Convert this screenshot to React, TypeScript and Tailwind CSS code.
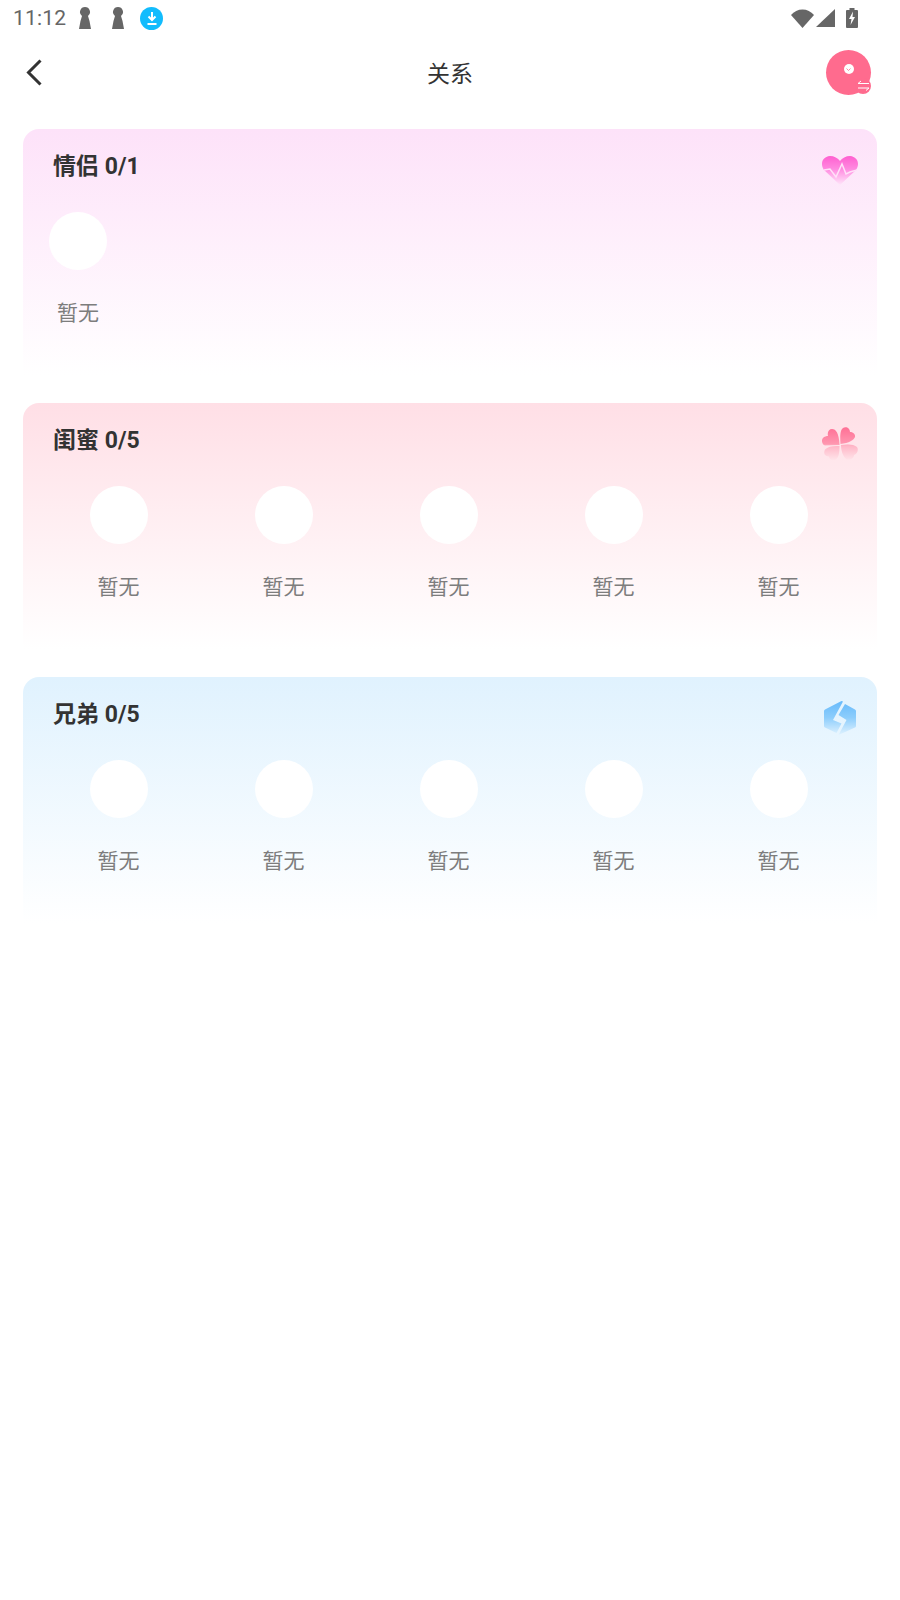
const FONT = "font-['Roboto','Noto_Sans_CJK_SC',sans-serif]";

function Keyhole({ className = "" }: { className?: string }) {
  return (
    <svg width="12" height="22" viewBox="0 0 12 22" className={className}>
      <path d="M6 0a5 5 0 0 1 3 9l1.500 5 1.500 8H0l1.500-8L3 9a5 5 0 0 1 3-9z" fill="#666" />
    </svg>
  );
}

function StatusBar() {
  return (
    <div className="h-[36px] flex items-center justify-between pl-[13px] pr-[42px]">
      <div className="flex items-center">
        <span className="text-[21px] tracking-[0.2px] text-[#666] mt-[1px]">11:12</span>
        <Keyhole className="ml-[13px]" />
        <Keyhole className="ml-[21px]" />
        <div className="ml-[16px] w-[23px] h-[23px] rounded-full bg-[#12bcfd] flex items-center justify-center">
          <svg width="14" height="15" viewBox="0 0 14 15">
            <path d="M7 1v7M3.500 5.500 7 9l3.500-3.500M2.500 13h9" stroke="#fff" strokeWidth="2" fill="none" />
          </svg>
        </div>
      </div>
      <div className="flex items-center">
        <svg width="23" height="19" viewBox="0 0 23 19">
          <path d="M0 6C3 2.500 7 .5 11.500 .5S20 2.500 23 6L11.500 19z" fill="#666" />
        </svg>
        <svg width="19" height="18" viewBox="0 0 19 18" className="ml-[2px]">
          <path d="M0 18 19 0v18z" fill="#666" />
        </svg>
        <svg width="12" height="20" viewBox="0 0 12 20" className="ml-[11px]">
          <path d="M3.500 0h5v2H11a1 1 0 0 1 1 1v16a1 1 0 0 1-1 1H1a1 1 0 0 1-1-1V3a1 1 0 0 1 1-1h2.500z" fill="#666" />
          <path d="M7 3.500 3 11h2.500L4.500 17 9 9H6.500z" fill="#fff" />
        </svg>
      </div>
    </div>
  );
}

function Header() {
  return (
    <div className="h-[75px] grid grid-cols-3 items-center">
      <div className="pl-[26px] mt-[-2px]">
        <svg width="16" height="27" viewBox="0 0 16 27">
          <path d="M14.500 1.500 2.500 13.500l12 12" stroke="#333" strokeWidth="3" fill="none" />
        </svg>
      </div>
      <span className="text-[23px] text-[#333] text-center mt-[3px]">关系</span>
      <div className="flex justify-end pr-[29px] mt-[-3px]">
        <div className="relative w-[45px] h-[45px] rounded-full bg-[#ff6b8e] flex items-center justify-center">
          <div className="w-[10px] h-[10px] rounded-full bg-white mb-[6px] flex items-center justify-center">
            <svg width="5" height="3" viewBox="0 0 5 3">
              <path d="M.5 .5 2.500 2.500 4.500 .5" stroke="#ff6b8e" strokeWidth="0.800" fill="none" />
            </svg>
          </div>
          <div className="absolute right-0 bottom-[1px] w-[16px] h-[16px] rounded-full bg-[#ff6b8e] flex items-center justify-center">
            <svg width="13" height="11" viewBox="0 0 13 11">
              <path d="M12 3.500H1L4 1M1 8h11L9 10.500" stroke="#fff" strokeWidth="1" fill="none" />
            </svg>
          </div>
        </div>
      </div>
    </div>
  );
}

function Slot() {
  return (
    <div className="flex flex-col items-center">
      <div className="w-[58px] h-[58px] rounded-full bg-white" />
      <span className="mt-[29px] text-[21px] leading-[28px] text-[#7d7d7d]">暂无</span>
    </div>
  );
}

function HeartIcon() {
  return (
    <svg width="36" height="29" viewBox="0 0 36 29">
      <defs>
        <linearGradient id="heart" x1="0" y1="0" x2="0" y2="1">
          <stop offset="0" stopColor="#ff5fd0" />
          <stop offset="0.45" stopColor="#ff8ae0" />
          <stop offset="1" stopColor="#ffe6fa" />
        </linearGradient>
      </defs>
      <path d="M18 29 2 14C-2 8 0 1 8 0c4 0 8 2 10 5 2-3 6-5 10-5 8 1 10 8 6 14z" fill="url(#heart)" />
      <path d="M2 14l6-1 6 8 6-13 4 10 4-2 7-2" stroke="#ffe0f8" strokeWidth="1.500" fill="none" />
    </svg>
  );
}

function CloverIcon() {
  return (
    <svg width="36" height="34" viewBox="0 0 36 34">
      <defs>
        <linearGradient id="clover" gradientUnits="userSpaceOnUse" x1="0" y1="0" x2="0" y2="34">
          <stop offset="0" stopColor="#ff6f95" />
          <stop offset="0.5" stopColor="#ff97b0" />
          <stop offset="0.55" stopColor="#ffb5c6" />
          <stop offset="1" stopColor="#ffe7ec" />
        </linearGradient>
      </defs>
      <g fill="url(#clover)">
        <path d="M17.500 18 3 18.500C0 18-1 13 1 11c1-1.500 4-2 5-2-1-4 1-7 4-7 4 0 7 4 7.500 16z" />
        <path d="M18.500 17C18 10 18 3 21 1c3-2 7 0 7 4 3 0 5.500 2 5 5-1 3-6 6-14.500 7z" />
        <path d="M17.500 19c0 6-.5 11-3.500 13.500-3 1.500-7 .5-7-3-4 0-6-3-4-7 3-3 8-4 14.500-3.500z" />
        <path d="M19 18c6-1 13-1 16 2 2 3 0 7-3 8 0 3-4 6-8 4-3-3-5-8-5-14z" />
      </g>
    </svg>
  );
}

function BoltIcon() {
  return (
    <svg width="32" height="35" viewBox="0 0 32 35">
      <defs>
        <linearGradient id="bolt" gradientUnits="userSpaceOnUse" x1="0" y1="0" x2="0" y2="35">
          <stop offset="0" stopColor="#64b9fb" />
          <stop offset="0.5" stopColor="#8ccdfc" />
          <stop offset="1" stopColor="#e0f2fe" />
        </linearGradient>
      </defs>
      <g fill="url(#bolt)">
        <path d="M17.500 1 1 9.500Q0 10 0 11v15q0 1 1 1.500L12.500 33l5-9.500L9 20 19 1.500z" />
        <path d="M21 4l10 5.500q1 .5 1 1.500v15q0 1-1 1.500L14.500 35l8-15-8-5z" />
      </g>
    </svg>
  );
}

type Relation = {
  title: string;
  slots: number;
  gradient: string;
  iconBox: string;
  icon: React.ReactNode;
};

const relations: Relation[] = [
  {
    title: "情侣 0/1",
    slots: 1,
    gradient: "bg-gradient-to-b from-[#fde2f9] to-white",
    iconBox: "mt-[27px] mr-[19px]",
    icon: <HeartIcon />,
  },
  {
    title: "闺蜜 0/5",
    slots: 5,
    gradient: "bg-gradient-to-b from-[#ffdfe6] to-white",
    iconBox: "mt-[24px] mr-[19px]",
    icon: <CloverIcon />,
  },
  {
    title: "兄弟 0/5",
    slots: 5,
    gradient: "bg-gradient-to-b from-[#e0f2fe] to-white",
    iconBox: "mt-[23px] mr-[21px]",
    icon: <BoltIcon />,
  },
];

function RelationCard({ item }: { item: Relation }) {
  return (
    <div className={`h-[246px] rounded-t-[16px] ${item.gradient}`}>
      <div className="h-[83px] flex justify-between items-start">
        <div className="pl-[30px] pt-[23px] text-[23px] leading-[30px] font-bold text-[#333]">{item.title}</div>
        <div className={item.iconBox}>{item.icon}</div>
      </div>
      {item.slots === 1 ? (
        <div className="flex pl-[26px]">
          <Slot />
        </div>
      ) : (
        <div className="grid grid-cols-5 pl-[13px] pr-[16px]">
          {Array.from({ length: item.slots }).map((_, i) => (
            <Slot key={i} />
          ))}
        </div>
      )}
    </div>
  );
}

export default function App() {
  return (
    <div className={`w-[900px] min-h-[1600px] bg-white ${FONT}`}>
      <StatusBar />
      <Header />
      <div className="flex flex-col gap-[28px] px-[23px] mt-[18px]">
        {relations.map((r) => (
          <RelationCard key={r.title} item={r} />
        ))}
      </div>
    </div>
  );
}
